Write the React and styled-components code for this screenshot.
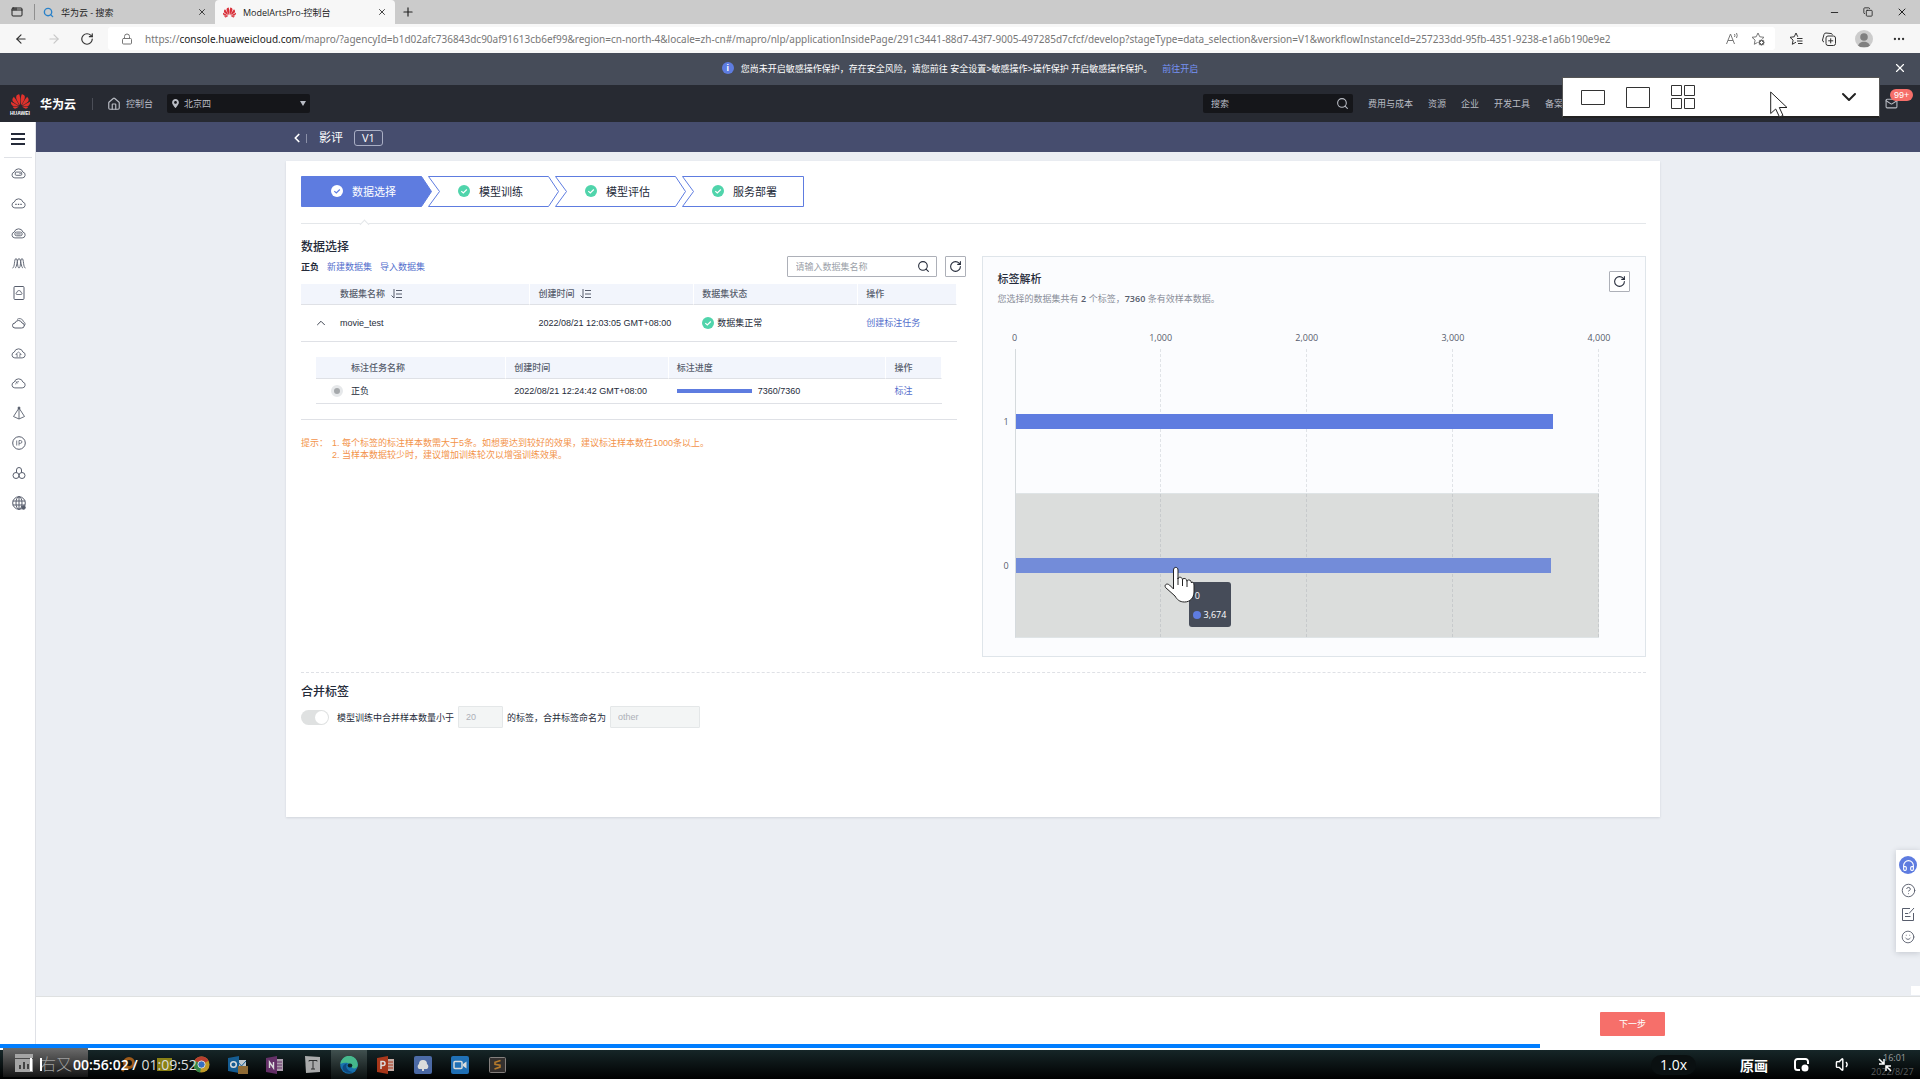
import React, { useState } from "react";
import styled, { createGlobalStyle } from "styled-components";
import {
  AppWindow,
  ArrowLeft,
  ArrowRight,
  ChevronDown,
  ChevronLeft,
  ChevronUp,
  CircleHelp,
  Copy,
  Ellipsis,
  Headphones,
  House,
  Lock,
  Mail,
  Minus,
  Plus,
  RotateCw,
  Search,
  Smile,
  Volume1,
  X
} from "lucide-react";
import { SiHuawei } from "react-icons/si";
import { FaMapMarkerAlt } from "react-icons/fa";

const uiFont = `"Liberation Sans", "Noto Sans CJK SC", sans-serif`;
const chromeFont = `"Open Sans", "Noto Sans CJK SC", sans-serif`;

const GlobalStyle = createGlobalStyle`
  * {
    box-sizing: border-box;
  }

  body {
    margin: 0;
    font-family: ${uiFont};
    font-size: 9px;
    color: #252b3a;
  }

  button, input, select {
    font: inherit;
    color: inherit;
  }

  button {
    padding: 0;
    border: 0;
    background: none;
  }

  svg {
    display: block;
    flex-shrink: 0;
  }
`;

const Window = styled.div`
  display: flex;
  flex-direction: column;
  height: 100vh;
  min-height: 960px;
  position: relative;
  overflow: hidden;
  background: #ebeef3;
`;

/* browser chrome */

const TabStrip = styled.div`
  display: flex;
  align-items: center;
  height: 24px;
  flex-shrink: 0;
  background: #cbcbcb;
  font-family: ${chromeFont};
  color: #222;
`;

const TabMenu = styled.button`
  display: flex;
  justify-content: center;
  width: 35px;
  height: 16px;
  align-items: center;
  border-right: 1px solid #8f8f8f;
`;

const Tab = styled.div`
  display: flex;
  align-items: center;
  gap: 7px;
  width: 180px;
  height: 24px;
  padding: 0 8px;
  border-radius: 4px 4px 0 0;
  background: ${props => (props.$active ? "#f7f7f7" : "transparent")};
`;

const TabTitle = styled.span`
  flex: 1;
  white-space: nowrap;
`;

const NewTab = styled.button`
  margin-left: 6px;
`;

const WindowButtons = styled.div`
  display: flex;
  align-items: center;
  gap: 23px;
  margin-left: auto;
  margin-right: 12px;
`;

const Toolbar = styled.div`
  display: flex;
  align-items: center;
  height: 29px;
  flex-shrink: 0;
  background: #f7f7f7;
  font-family: ${chromeFont};
  color: #333;
`;

const NavButtons = styled.div`
  display: flex;
  gap: 19px;
  width: 108px;
  padding-left: 14px;
`;

const AddressBar = styled.div`
  display: flex;
  align-items: center;
  flex: 1;
  min-width: 0;
  gap: 12px;
  height: 23px;
  padding: 0 10px 0 13px;
  border-radius: 3px;
  background: #fff;
  color: #777;
`;

const Url = styled.div`
  flex: 1;
  overflow: hidden;
  white-space: nowrap;
  font-family: "Noto Sans", sans-serif;
  font-size: 10px;

  b {
    font-weight: 400;
    color: #222;
  }
`;

const ToolbarIcons = styled.div`
  display: flex;
  align-items: center;
  gap: 19px;
  padding: 0 14px;
`;

const Avatar = styled.div`
  display: flex;
  align-items: flex-end;
  justify-content: center;
  width: 18px;
  height: 18px;
  overflow: hidden;
  border-radius: 50%;
  background: #ccc;
`;

/* console header */

const Notice = styled.div`
  display: flex;
  align-items: center;
  justify-content: center;
  position: relative;
  height: 32px;
  flex-shrink: 0;
  padding-bottom: 2px;
  background: #464c59;
  color: #fff;

  a {
    margin-left: 10px;
    color: #7693f5;
    text-decoration: none;
  }
`;

const InfoDot = styled.span`
  width: 12px;
  height: 12px;
  margin-right: 7px;
  border-radius: 50%;
  background: #5e7ce0;
  font-weight: 700;
  line-height: 12px;
  text-align: center;
`;

const NoticeClose = styled.button`
  position: absolute;
  right: 13px;
`;

const Header = styled.header`
  display: flex;
  align-items: center;
  height: 37px;
  flex-shrink: 0;
  background: #272a32;
  color: #b9bcc4;
`;

const Brand = styled.a`
  display: flex;
  align-items: center;
  gap: 10px;
  padding: 0 16px 0 10px;
  font-size: 12px;
  font-weight: 700;
  color: #fff;
  text-decoration: none;
`;

const LogoMark = styled.span`
  display: flex;
  flex-direction: column;
  align-items: center;
  width: 20px;
  font-size: 5px;
  line-height: 5px;
`;

const Home = styled.a`
  display: flex;
  align-items: center;
  gap: 5px;
  height: 12px;
  padding: 0 14px;
  border-left: 1px solid #4b4e57;
  color: inherit;
  text-decoration: none;
`;

const DarkField = styled.label`
  display: flex;
  align-items: center;
  width: ${props => props.$width}px;
  height: 19px;
  padding: 0 4px;
  border-radius: 2px;
  background: #15161a;

  select,
  input {
    flex: 1;
    min-width: 0;
    border: 0;
    outline: 0;
    padding: 0 4px;
    appearance: none;
    background: transparent;
  }

  input::placeholder {
    color: #b9bcc4;
  }
`;

const HeaderSpace = styled.div`
  flex: 1;
`;

const HeaderLinks = styled.nav`
  display: flex;
  align-items: center;
  gap: 15px;
  width: 552px;
  margin-left: 15px;
  padding-right: 22px;

  a {
    color: inherit;
    text-decoration: none;
    white-space: nowrap;
  }
`;

const MailButton = styled.button`
  position: relative;
  margin-left: auto;
`;

const Badge = styled.span`
  position: absolute;
  top: -8px;
  left: 5px;
  padding: 0 4px;
  border-radius: 6px;
  background: #f66f6a;
  line-height: 12px;
  color: #fff;
`;

/* page body */

const Body = styled.div`
  display: flex;
  flex: 1;
  min-height: 0;
`;

const Sidebar = styled.aside`
  display: flex;
  flex-direction: column;
  align-items: center;
  width: 36px;
  border-right: 1px solid #dfe1e6;
  background: #fff;
  color: #575d6c;
`;

const MenuButton = styled.button`
  display: flex;
  justify-content: center;
  align-items: center;
  width: 28px;
  height: 36px;
  padding-bottom: 2px;
  border-bottom: 1px solid #dfe1e6;
`;

const SideLink = styled.a`
  display: flex;
  align-items: center;
  justify-content: center;
  width: 36px;
  height: 30px;
  padding-left: 2px;
  color: inherit;
`;

const Main = styled.main`
  display: flex;
  flex-direction: column;
  flex: 1;
  min-width: 0;
`;

const TitleBar = styled.div`
  display: flex;
  align-items: center;
  height: 30px;
  flex-shrink: 0;
  padding: 2px 0 0 254px;
  background: #464d6e;
  font-size: 12px;
  color: #fff;
`;

const AppName = styled.span`
  margin: 0 11px 0 2px;
  padding-left: 12px;
  border-left: 1px solid #8b90a8;
  line-height: 9px;
`;

const Version = styled.span`
  padding: 0 7px;
  border: 1px solid #a9aec4;
  border-radius: 3px;
  font-family: ${chromeFont};
  font-size: 11px;
  line-height: 14px;
`;

const Scroller = styled.div`
  flex: 1;
  min-height: 0;
  padding: 9px 260px 0 250px;
`;

const Sheet = styled.section`
  padding: 15px 14px 89px 15px;
  background: #fff;
  box-shadow: 0 1px 2px rgba(37, 43, 58, 0.12);
`;

const Steps = styled.div`
  display: flex;
`;

const Step = styled.button`
  display: flex;
  align-items: center;
  gap: 9px;
  position: relative;
  width: 131px;
  height: 31px;
  margin-right: -4px;
  padding: 0 0 2px 30px;
  font-size: 11px;
  color: ${props => (props.$current ? "#fff" : "#252b3a")};
`;

const StepShape = styled.svg`
  position: absolute;
  inset: 0;
`;

const StepMark = styled.span`
  position: relative;
`;

const StepDivider = styled.div`
  position: relative;
  height: 1px;
  margin-top: 16px;
  background: #e4e7ea;

  &::before {
    content: "";
    position: absolute;
    top: -2px;
    left: 60px;
    width: 6px;
    height: 6px;
    border: solid #e4e7ea;
    border-width: 1px 0 0 1px;
    background: #fff;
    transform: rotate(45deg);
  }
`;

const Columns = styled.div`
  display: grid;
  grid-template-columns: 1fr 1fr;
  gap: 16px;
`;

const DataColumn = styled.div`
  padding-top: 15px;
`;

const SectionTitle = styled.h2`
  margin: 0;
  font-size: 12px;
  font-weight: 500;
  line-height: 16px;
`;

const Filters = styled.div`
  display: flex;
  align-items: center;
  gap: 8px;
  height: 21px;
  margin: 1px 0 7px;
`;

const TextLink = styled.a`
  color: #526ecc;
  text-decoration: none;
`;

const SearchBox = styled.label`
  display: flex;
  align-items: center;
  width: 150px;
  height: 21px;
  margin-left: auto;
  padding: 0 6px 0 8px;
  border: 1px solid #adb0b8;
  border-radius: 1px;

  input {
    flex: 1;
    min-width: 0;
    padding: 0;
    border: 0;
    outline: 0;
  }

  input::placeholder {
    color: #9b9fa8;
  }
`;

const SquareButton = styled.button`
  display: flex;
  align-items: center;
  justify-content: center;
  width: 21px;
  height: 21px;
  border: 1px solid #adb0b8;
  border-radius: 1px;
  background: #fff;
`;

const DataTable = styled.table`
  width: ${props => (props.$inner ? "100%" : "calc(100% - 9px)")};
  table-layout: fixed;
  border-collapse: separate;
  border-spacing: 0;
  text-align: left;
  line-height: 12px;
`;

const Col = styled.col`
  width: ${props => props.$share}%;
`;

const Th = styled.th`
  height: ${props => (props.$tall ? 22 : 21)}px;
  padding: 0 8px 0 ${props => props.$indent || 8}px;
  border-bottom: 1px solid #dfe1e6;
  border-right: 1px solid #fff;
  background: #f2f5fc;
  font-weight: 500;
  color: #575d6c;
`;

const Td = styled.td`
  height: ${props => (props.$tight ? 25 : 37)}px;
  padding: 0 8px 0 ${props => props.$indent || 8}px;
  border-bottom: 1px solid #dfe1e6;
`;

const NestedCell = styled.td`
  padding: 15px;
  border-bottom: 1px solid #dfe1e6;
`;

const CellFlow = styled.div`
  display: flex;
  align-items: center;
  gap: ${props => props.$gap}px;
`;

const Radio = styled.input`
  width: 12px;
  height: 12px;
  margin: 0;
  appearance: none;
  border: 3px solid #e6e8ea;
  border-radius: 50%;
  background: #a5a8ab;
`;

const Progress = styled.div`
  width: 75px;
  height: 4px;
  background: #e4e7ea;
`;

const ProgressFill = styled.div`
  height: 100%;
  background: #5e7ce0;
`;

const Hints = styled.div`
  display: flex;
  margin-top: 17px;
  line-height: 12px;
  color: #f3934b;
`;

const HintList = styled.div`
  margin-left: 4px;
`;

const ChartPanel = styled.section`
  height: 401px;
  margin-top: 32px;
  padding: 14px 15px;
  border: 1px solid #dfe5ea;
  background: #fbfcfe;
`;

const ChartHead = styled.div`
  display: flex;
  justify-content: space-between;
`;

const ChartTitle = styled.h3`
  margin: 0 0 6px;
  font-size: 11px;
  font-weight: 500;
  line-height: 16px;
`;

const ChartNote = styled.p`
  margin: 0;
  line-height: 12px;
  color: #8a8e99;

  b {
    font-family: ${chromeFont};
    font-weight: 600;
    color: #575d6c;
  }
`;

const Ticks = styled.div`
  display: flex;
  justify-content: space-between;
  margin: 27px 31px 5px 17px;
  font-family: ${chromeFont};
  line-height: 12px;
  color: #575d6c;
`;

const Tick = styled.span`
  display: flex;
  justify-content: center;
  width: 0;
`;

const Plot = styled.div`
  position: relative;
  margin: 0 31px 0 17px;
  border-left: 1px solid #d5dadd;
  border-bottom: 1px solid #dfe4e6;
`;

const GridLines = styled.div`
  display: grid;
  grid-template-columns: repeat(4, 1fr);
  position: absolute;
  inset: 0;

  span {
    border-right: 1px dashed rgba(120, 130, 140, 0.2);
  }
`;

const Band = styled.div`
  display: flex;
  align-items: center;
  height: 144px;
  border-top: 1px solid ${props => (props.$hovered ? "#dfe4e6" : "transparent")};
  background: ${props => (props.$hovered ? "#dbdddc" : "none")};
`;

const BandName = styled.span`
  position: absolute;
  left: -12px;
  font-family: ${chromeFont};
  color: #575d6c;
`;

const Bar = styled.div`
  position: relative;
  z-index: 1;
  height: 15px;
  background: ${props => (props.$hovered ? "#738cd9" : "#5e7ce0")};
`;

const Tooltip = styled.div`
  position: absolute;
  z-index: 1;
  top: 233px;
  left: 173px;
  width: 42px;
  height: 45px;
  padding: 4px;
  border-radius: 3px;
  background: #464c59;
  font-family: ${chromeFont};
  line-height: 19px;
  color: #fff;
`;

const Dot = styled.span`
  width: 8px;
  height: 8px;
  border-radius: 50%;
  background: #5e7ce0;
`;

const HandCursor = styled.svg`
  position: absolute;
  z-index: 2;
  top: 217px;
  left: 148px;
`;

const MergeSection = styled.section`
  margin-top: 15px;
  padding-top: 11px;
  border-top: 1px dashed #dfe1e6;
`;

const MergeRow = styled.div`
  display: flex;
  align-items: center;
  height: 22px;
  margin-top: 6px;
`;

const Toggle = styled.input`
  display: flex;
  align-items: center;
  justify-content: flex-end;
  width: 28px;
  height: 15px;
  margin: 0 8px 0 0;
  padding: 1px;
  appearance: none;
  border-radius: 8px;
  background: #dfe1e1;

  &::before {
    content: "";
    width: 13px;
    height: 13px;
    border-radius: 50%;
    background: #fff;
  }
`;

const DisabledInput = styled.input`
  width: ${props => props.$width}px;
  height: 22px;
  margin: 0 4px;
  padding: 0 7px;
  border: 1px solid #e4e7e8;
  border-radius: 1px;
  background: #f3f5f5;
  color: #adb0b8;
`;

const Footer = styled.footer`
  display: flex;
  align-items: center;
  justify-content: flex-end;
  height: 48px;
  flex-shrink: 0;
  padding: 6px 255px 0 0;
  border-top: 1px solid #dfe1e1;
  background: #fff;
`;

const NextButton = styled.button`
  width: 65px;
  height: 24px;
  border-radius: 1px;
  background: #f66f6a;
  color: #fff;
`;

/* things floating over the page */

const HelpDock = styled.div`
  display: flex;
  flex-direction: column;
  align-items: center;
  gap: 9px;
  position: absolute;
  right: 0;
  bottom: 127px;
  width: 24px;
  height: 102px;
  padding-top: 6px;
  background: #fff;
  box-shadow: 0 1px 6px rgba(37, 43, 58, 0.2);
  color: #575d6c;
`;

const Headset = styled.button`
  display: flex;
  align-items: center;
  justify-content: center;
  width: 18px;
  height: 18px;
  border-radius: 50%;
  background: #5e7ce0;
  color: #fff;
`;

const ScrollCorner = styled.div`
  position: absolute;
  right: 0;
  bottom: 84px;
  width: 9px;
  height: 9px;
  background: #fff;
`;

const ViewPanel = styled.div`
  display: flex;
  align-items: center;
  gap: 21px;
  position: absolute;
  top: 77px;
  right: 40px;
  width: 318px;
  height: 41px;
  padding: 0 18px;
  border: 1px solid #555;
  border-bottom: 2px solid #222;
  background: #fff;
`;

const ViewToggle = styled.button`
  margin-left: auto;
`;

const ArrowCursor = styled.svg`
  position: absolute;
  top: 13px;
  left: 207px;
`;

/* video player strip */

const Timeline = styled.div`
  height: 6px;
  flex-shrink: 0;
  background: #fff;
`;

const Played = styled.div`
  height: 4px;
  background: #007eff;
`;

const Taskbar = styled.div`
  display: flex;
  align-items: center;
  position: relative;
  height: 29px;
  flex-shrink: 0;
  background: linear-gradient(#162628, #000);
`;

const Apps = styled.div`
  display: flex;
  flex: 1;
  padding-left: 109px;
`;

const AppSlot = styled.span`
  display: flex;
  align-items: center;
  justify-content: center;
  width: 36px;
  height: 29px;
  margin-right: 1px;
  background: ${props => (props.$open ? "linear-gradient(#40504f, #0b1010)" : "none")};

  svg {
    opacity: 0.85;
  }
`;

const Clock = styled.div`
  width: 54px;
  padding-left: 17px;
  font-family: ${chromeFont};
  line-height: 14px;
  color: #9b9f9f;

  small {
    display: block;
    margin-left: -12px;
    font-size: 9px;
    color: #5a5d5e;
  }
`;

const InputHint = styled.div`
  display: flex;
  align-items: center;
  gap: 7px;
  position: absolute;
  left: 3px;
  bottom: 2px;
  width: 85px;
  height: 29px;
  padding-left: 12px;
  background: linear-gradient(#6b6b6b, #151515);
  font-size: 16px;
  font-weight: 300;
  color: #a0a0a0;
`;

const PlayerLeft = styled.div`
  display: flex;
  align-items: center;
  gap: 31px;
  position: absolute;
  left: 30px;
  top: 0;
  height: 29px;
`;

const PauseButton = styled.button`
  width: 12px;
  height: 13px;
  border: solid #fff;
  border-width: 0 2px;
`;

const Time = styled.span`
  font-family: ${chromeFont};
  font-size: 14px;
  color: #dcdcdc;
  white-space: nowrap;

  b {
    font-weight: 600;
    color: #fff;
  }
`;

const PlayerRight = styled.div`
  display: flex;
  align-items: center;
  position: absolute;
  right: 28px;
  top: 0;
  height: 29px;
  gap: 26px;
  color: #fff;
`;

const Speed = styled.button`
  width: 45px;
  height: 20px;
  margin-right: 18px;
  border-radius: 10px;
  background: #0a1011;
  font-family: ${chromeFont};
  font-size: 14px;
  line-height: 20px;
`;

const Quality = styled.button`
  font-size: 14px;
  font-weight: 700;
`;

const CheckDot = ({ light }) => (
  <svg width="12" height="12" viewBox="0 0 12 12">
    <circle cx="6" cy="6" r="6" fill={light ? "#fff" : "#50d4ab"} />
    <path d="M3.3 6.1l2 1.9 3.5-3.5" fill="none" stroke={light ? "#5e7ce0" : "#fff"} strokeWidth="1.2" />
  </svg>
);

const SortIcon = () => (
  <svg width="12" height="10" viewBox="0 0 12 10" fill="none" stroke="#575d6c">
    <path d="M3 0v9L.5 6.5M5 1.5h6M5 5h6M5 8.5h6" />
  </svg>
);

const Cloud = ({ children }) => (
  <svg width="15" height="12" viewBox="0 0 16 13" fill="none" stroke="currentColor">
    <path d="M4 11.8h8a3.2 3.2 0 0 0 .8-6.3 4.9 4.9 0 0 0-9.4 0A3.2 3.2 0 0 0 4 11.8z" />
    {children}
  </svg>
);

const Glyph = ({ children }) => (
  <svg width="14" height="14" viewBox="0 0 14 14" fill="none" stroke="currentColor">
    {children}
  </svg>
);

const sideIcons = [
  <Cloud><rect x="4.5" y="5.5" width="7" height="3.5" rx="1" /><path d="M9 7.2h1.5" /></Cloud>,
  <Cloud><path d="M4.5 8h1.5M7.3 8h1.5M10 8h1.5" strokeWidth="1.5" /></Cloud>,
  <Cloud><rect x="4" y="5.5" width="8" height="4" rx="2" /><path d="M5.5 7.5h5" /></Cloud>,
  <Glyph><path d="M.5 12C3 12 2 2.5 4 2.5S5 12 7 12s1-9.5 3-9.5S11 12 13.5 12M3 12C5 12 5 2.5 7 2.5S9 12 11 12" strokeWidth=".9" /></Glyph>,
  <Glyph><rect x="2" y=".5" width="10" height="13" rx="1" /><path d="M5 8.5h4a1 1 0 0 0 0-2 2 2 0 0 0-4 0 1 1 0 0 0 0 2z" strokeWidth=".8" /></Glyph>,
  <Glyph><path d="M3 12h6.5a2.5 2.5 0 0 0 .5-5 3.7 3.7 0 0 0-7 0A2.5 2.5 0 0 0 3 12z" /><path d="M5 3.5a4 4 0 0 1 6.5 2.2 2.4 2.4 0 0 1 .5 4.3" strokeWidth=".8" /></Glyph>,
  <Cloud><path d="M6.5 11V8H5l3-2.5L11 8H9.5v3" strokeWidth=".8" /></Cloud>,
  <Cloud><path d="M5 8c0-2 1.5-3 3.5-3M5 4.5L7 7" strokeWidth=".8" /></Cloud>,
  <Glyph><path d="M7 2L1.5 10.5 7 13l5.5-2.5zM7 2v11" strokeWidth=".9" /><circle cx="7" cy="2" r="1" fill="currentColor" /></Glyph>,
  <Glyph><circle cx="7" cy="7" r="6.3" /><path d="M4.7 4.5v5M7 9.5v-5h1.5a1.4 1.4 0 0 1 0 2.8H7" strokeWidth=".8" /></Glyph>,
  <Glyph><path d="M4.5 6.5V4a2.5 2.5 0 0 1 5 0v2.5" /><circle cx="4" cy="9.5" r="3" /><circle cx="10" cy="9.5" r="3" /></Glyph>,
  <Glyph><circle cx="7" cy="7" r="6.3" /><ellipse cx="7" cy="7" rx="3" ry="6.3" /><path d="M.7 5h12.6M.7 9h12.6M7 .7v12.6" /><circle cx="11.5" cy="11.5" r="1.8" fill="currentColor" /></Glyph>
];

const star = "M7 1l1.8 3.8 4.2.5-3.1 2.8.8 4.2L7 10.2l-3.7 2.1.8-4.2L1 5.3l4.2-.5z";

const taskIcons = [
  <svg width="18" height="18" viewBox="0 0 18 18"><circle cx="11" cy="7" r="4.5" fill="none" stroke="#b8671a" strokeWidth="3" /><path d="M7 11l-3 4" stroke="#b8671a" strokeWidth="3" /></svg>,
  <svg width="15" height="15" viewBox="0 0 15 15"><path d="M0 1h15v13H0z" fill="#a09414" /></svg>,
  <svg width="17" height="17" viewBox="0 0 18 18"><circle cx="9" cy="9" r="8.5" fill="#e2b32c" /><path d="M9 9L1.6 4.8A8.5 8.5 0 0 1 16.4 5z" fill="#d64533" /><path d="M9 9L1.6 4.8a8.5 8.5 0 0 0 6 12.6z" fill="#3c9d52" /><circle cx="9" cy="9" r="3.8" fill="#3e7fe0" stroke="#fff" /></svg>,
  <svg width="20" height="18" viewBox="0 0 20 18"><path d="M9 4h9v9H9z" fill="#dfe8ef" /><path d="M9 5l4.5 5L18 5" fill="none" stroke="#1769a8" /><path d="M0 2l11-2v17L0 15z" fill="#1769a8" /><circle cx="5.5" cy="8.5" r="2.8" fill="none" stroke="#fff" strokeWidth="1.5" /><path d="M10 10h10v8H10z" fill="#a87c3c" /></svg>,
  <svg width="18" height="18" viewBox="0 0 18 18"><path d="M9 3h8v12H9z" fill="#c9b6c8" /><path d="M11 6h5M11 9h5M11 12h5" stroke="#743576" /><path d="M0 2l11-2v18L0 16z" fill="#743576" /><path d="M3.5 12V6l4 6V6" fill="none" stroke="#fff" strokeWidth="1.4" /></svg>,
  <svg width="17" height="17" viewBox="0 0 17 17"><path d="M1 0l15 1v15L2 17z" fill="#c5c5c5" /><path d="M5 5.5v-1h8v1M9 4.5V13M7 13h4" fill="none" stroke="#333" /></svg>,
  <svg width="18" height="18" viewBox="0 0 18 18"><circle cx="9" cy="9" r="8.8" fill="#177ec4" /><path d="M.4 8A8.7 8.7 0 0 1 17.8 9c0 3-3 4-5.8 3 1-4-6-7-11.6-4z" fill="#4bcf9b" /><path d="M7 7.5c-2 3 0 8 6 8.5a9 9 0 0 1-9-1c-3-3-1-7 3-7.5z" fill="#0c4f92" /><ellipse cx="10" cy="9.5" rx="2.3" ry="2" fill="#0b2226" /></svg>,
  <svg width="18" height="18" viewBox="0 0 18 18"><path d="M9 3h8v12H9z" fill="#e6c7bf" /><path d="M11 6h5M11 9h5M11 12h5" stroke="#c43e1c" /><path d="M0 2l11-2v18L0 16z" fill="#c43e1c" /><path d="M4 13V5.5h2a2 2 0 0 1 0 4H4" fill="none" stroke="#fff" strokeWidth="1.5" /></svg>,
  <svg width="18" height="18" viewBox="0 0 18 18"><rect width="18" height="18" rx="2" fill="#5779bf" /><path d="M5 13a3 3 0 0 1 0-5 4 4 0 0 1 8 0 3 3 0 0 1 0 5z" fill="#fff" /><path d="M9 11v4" stroke="#fff" strokeWidth="2" /></svg>,
  <svg width="18" height="18" viewBox="0 0 18 18"><rect width="18" height="18" rx="2" fill="#2380d2" /><rect x="3" y="5.5" width="8" height="7" rx="1" fill="none" stroke="#fff" strokeWidth="1.5" /><path d="M12 8l3.5-2.5v7L12 10z" fill="#fff" /></svg>,
  <svg width="17" height="16" viewBox="0 0 17 16"><rect x=".5" y=".5" width="16" height="15" rx="1" fill="#3b3634" stroke="#9a9390" /><path d="M11.5 3.5L6 5.3v2l5 .8v2L5.5 12" fill="none" stroke="#d48d30" strokeWidth="1.6" /></svg>
];

const steps = ["数据选择", "模型训练", "模型评估", "服务部署"];
const labels = [
  { name: "1", count: 3686 },
  { name: "0", count: 3674 }
];
const axisMax = 4000;
const played = 56 * 60 + 2;
const duration = 69 * 60 + 52;

function StepOutline({ index, current }) {
  const last = index === steps.length - 1;
  const left = index === 0 ? "M.5 .5" : "M11.5 15.5L.5 .5";
  const right = last ? "H121.5V30.5" : "H120.5L130.5 15.5L120.5 30.5";
  return (
    <StepShape width="131" height="31" viewBox="0 0 131 31">
      <path
        d={`${left}${right}H.5Z`}
        fill={current ? "#5e7ce0" : "#fff"}
        stroke="#5e7ce0"
      />
    </StepShape>
  );
}

function BrowserChrome() {
  return (
    <>
      <TabStrip>
        <TabMenu aria-label="标签页菜单"><AppWindow size={12} /></TabMenu>
        <Tab>
          <Search size={11} color="#2b82c9" strokeWidth={3} />
          <TabTitle>华为云 - 搜索</TabTitle>
          <button aria-label="关闭标签页"><X size={10} /></button>
        </Tab>
        <Tab $active>
          <SiHuawei size={13} color="#d9303a" />
          <TabTitle>ModelArtsPro-控制台</TabTitle>
          <button aria-label="关闭标签页"><X size={10} /></button>
        </Tab>
        <NewTab aria-label="新标签页"><Plus size={14} /></NewTab>
        <WindowButtons>
          <button aria-label="最小化"><Minus size={11} /></button>
          <button aria-label="还原"><Copy size={10} /></button>
          <button aria-label="关闭"><X size={12} /></button>
        </WindowButtons>
      </TabStrip>
      <Toolbar>
        <NavButtons>
          <button aria-label="后退"><ArrowLeft size={14} /></button>
          <button aria-label="前进"><ArrowRight size={14} color="#c8c8c8" /></button>
          <button aria-label="刷新"><RotateCw size={14} /></button>
        </NavButtons>
        <AddressBar>
          <Lock size={12} />
          <Url>
            https://<b>console.huaweicloud.com</b>
            /mapro/?agencyId=b1d02afc736843dc90af91613cb6ef99&amp;region=cn-north-4&amp;locale=zh-cn#/mapro/nlp/applicationInsidePage/291c3441-88d7-43f7-9005-497285d7cfcf/develop?stageType=data_selection&amp;version=V1&amp;workflowInstanceId=257233dd-95fb-4351-9238-e1a6b190e9e2
          </Url>
          <Glyph><path d="M1.5 12L5.5 2l4 10M3 8.5h5M9.5 2a3 3 0 0 1 0 3M11.5 1a5 5 0 0 1 0 5" /></Glyph>
          <Glyph><path d={star} /><circle cx="10.5" cy="10.5" r="3.5" fill="#666" stroke="#fff" /><path d="M9 10.5h3M10.5 9v3" stroke="#fff" /></Glyph>
        </AddressBar>
        <ToolbarIcons>
          <Glyph><path d="M7 10.2l-3.7 2.1.8-4.2L1 5.3l4.2-.5L7 1l1.8 3.8M8 6.5h5.5M8 9h5.5M9 11.5h4.5" /></Glyph>
          <Glyph><rect x="4" y="4" width="9.5" height="9.5" rx="2" /><path d="M8.7 6.3v5M6.2 8.8h5M2 10a2 2 0 0 1-1.5-2L2 2.5A2 2 0 0 1 4 1l5 .5a2 2 0 0 1 1.5 1.2" /></Glyph>
          <Avatar>
            <svg width="14" height="16" viewBox="0 0 14 16" fill="#808080"><circle cx="7" cy="5" r="3.8" /><path d="M1 15c0-7 12-7 12 0z" /></svg>
          </Avatar>
          <Ellipsis size={14} />
        </ToolbarIcons>
      </Toolbar>
    </>
  );
}

function ConsoleHeader() {
  return (
    <>
      <Notice>
        <InfoDot>i</InfoDot>
        您尚未开启敏感操作保护，存在安全风险，请您前往 安全设置&gt;敏感操作&gt;操作保护 开启敏感操作保护。
        <a href="#security">前往开启</a>
        <NoticeClose aria-label="关闭提示"><X size={14} /></NoticeClose>
      </Notice>
      <Header>
        <Brand href="#home">
          <LogoMark>
            <SiHuawei size={19} color="#e0322c" />
            HUAWEI
          </LogoMark>
          华为云
        </Brand>
        <Home href="#console"><House size={14} />控制台</Home>
        <DarkField $width={143}>
          <FaMapMarkerAlt size={9} />
          <select aria-label="区域"><option>北京四</option></select>
          <svg width="6" height="5" viewBox="0 0 6 5" fill="currentColor"><path d="M0 0h6L3 5z" /></svg>
        </DarkField>
        <HeaderSpace />
        <DarkField $width={150}>
          <input aria-label="搜索" placeholder="搜索" />
          <Search size={13} />
        </DarkField>
        <HeaderLinks>
          <a href="#cost">费用与成本</a>
          <a href="#resource">资源</a>
          <a href="#company">企业</a>
          <a href="#tools">开发工具</a>
          <a href="#icp">备案</a>
          <MailButton aria-label="消息"><Mail size={13} /><Badge>99+</Badge></MailButton>
        </HeaderLinks>
      </Header>
    </>
  );
}

function DatasetTable() {
  return (
    <DataTable>
      <colgroup>
        <Col $share={35} /><Col $share={25} /><Col $share={25} /><Col $share={15} />
      </colgroup>
      <thead>
        <tr>
          <Th $indent={39}><CellFlow $gap={6}>数据集名称 <SortIcon /></CellFlow></Th>
          <Th><CellFlow $gap={6}>创建时间 <SortIcon /></CellFlow></Th>
          <Th>数据集状态</Th>
          <Th>操作</Th>
        </tr>
      </thead>
      <tbody>
        <tr>
          <Td $indent={13}>
            <CellFlow $gap={12}>
              <button aria-label="收起"><ChevronUp size={14} strokeWidth={1.5} /></button>
              movie_test
            </CellFlow>
          </Td>
          <Td>2022/08/21 12:03:05 GMT+08:00</Td>
          <Td><CellFlow $gap={3}><CheckDot />数据集正常</CellFlow></Td>
          <Td><TextLink href="#create">创建标注任务</TextLink></Td>
        </tr>
        <tr>
          <NestedCell colSpan={4}>
            <DataTable $inner>
              <colgroup>
                <Col $share={30.4} /><Col $share={26} /><Col $share={34.8} /><Col $share={8.8} />
              </colgroup>
              <thead>
                <tr>
                  <Th $tall $indent={35}>标注任务名称</Th>
                  <Th $tall>创建时间</Th>
                  <Th $tall>标注进度</Th>
                  <Th $tall>操作</Th>
                </tr>
              </thead>
              <tbody>
                <tr>
                  <Td $tight $indent={15}>
                    <CellFlow as="label" $gap={8}>
                      <Radio type="radio" name="task" defaultChecked />
                      正负
                    </CellFlow>
                  </Td>
                  <Td $tight>2022/08/21 12:24:42 GMT+08:00</Td>
                  <Td $tight>
                    <CellFlow $gap={6}>
                      <Progress><ProgressFill style={{ width: `${(7360 / 7360) * 100}%` }} /></Progress>
                      7360/7360
                    </CellFlow>
                  </Td>
                  <Td $tight><TextLink href="#label">标注</TextLink></Td>
                </tr>
              </tbody>
            </DataTable>
          </NestedCell>
        </tr>
      </tbody>
    </DataTable>
  );
}

function LabelChart() {
  const [hovered] = useState("0");

  return (
    <ChartPanel>
      <ChartHead>
        <div>
          <ChartTitle>标签解析</ChartTitle>
          <ChartNote>您选择的数据集共有 <b>2</b> 个标签，<b>7360</b> 条有效样本数据。</ChartNote>
        </div>
        <SquareButton aria-label="刷新图表"><RotateCw size={13} /></SquareButton>
      </ChartHead>
      <Ticks>
        {[0, 1000, 2000, 3000, 4000].map(value => (
          <Tick key={value}>{value.toLocaleString("en-US")}</Tick>
        ))}
      </Ticks>
      <Plot>
        {labels.map(label => (
          <Band key={label.name} $hovered={label.name === hovered}>
            <BandName>{label.name}</BandName>
            <Bar
              $hovered={label.name === hovered}
              style={{ width: `${(label.count / axisMax) * 100}%` }}
            />
          </Band>
        ))}
        <GridLines><span /><span /><span /><span /></GridLines>
        <Tooltip>
          <div>&nbsp;0</div>
          <CellFlow $gap={3}><Dot />3,674</CellFlow>
        </Tooltip>
        <HandCursor width="31" height="37" viewBox="0 0 31 37">
          <path
            d="M9.5 23V4c0-3.5 4.5-3.5 4.5 0v9c0-2.5 4.5-2.5 4.5 1 0-2.5 4.5-2 4.5 1.5 0-2.5 4.5-2 4.5 1.5 0-1.5 2.5-1 2.5 2v7c0 6-4 10-9.5 10-5 0-7.5-2.5-9.5-6L1.5 21.5c-1.5-3 1.5-4.5 4-2.5z"
            fill="#fff"
            stroke="#222"
          />
          <path d="M14 12v7M18.5 14v6M23 15.5V21" stroke="#222" />
        </HandCursor>
      </Plot>
    </ChartPanel>
  );
}

function VideoPlayer() {
  return (
    <>
      <Timeline><Played style={{ width: `${(played / duration) * 100}%` }} /></Timeline>
      <Taskbar>
        <Apps>
          {taskIcons.map((icon, index) => (
            <AppSlot key={index} $open={index === 6}>{icon}</AppSlot>
          ))}
        </Apps>
        <Clock>16:01<small>2022/8/27</small></Clock>
        <InputHint>
          <svg width="18" height="18" viewBox="0 0 18 18" fill="#a5a5a5"><path d="M0 0h18v4H0zM0 5h18v13H0z" /><path d="M5 15v-4M9 15V8M13 15v-5" stroke="#444" strokeWidth="2" /></svg>
          右又
        </InputHint>
        <PlayerLeft>
          <PauseButton aria-label="暂停" />
          <Time><b>00:56:02 /</b> 01:09:52</Time>
        </PlayerLeft>
        <PlayerRight>
          <Speed>1.0x</Speed>
          <Quality>原画</Quality>
          <button aria-label="画中画">
            <svg width="15" height="14" viewBox="0 0 15 14" fill="none" stroke="#fff" strokeWidth="2"><path d="M6 12H3.5A2.5 2.5 0 0 1 1 9.5v-6A2.5 2.5 0 0 1 3.5 1h8A2.5 2.5 0 0 1 14 3.5V6" /><circle cx="11" cy="10" r="2.5" fill="#fff" /></svg>
          </button>
          <button aria-label="音量"><Volume1 size={17} /></button>
          <button aria-label="退出全屏">
            <svg width="14" height="16" viewBox="0 0 14 16" fill="none" stroke="#fff" strokeWidth="1.5"><path d="M1 2l4.5 4.5M6 2v5H1M13 14L8.5 9.5M8 14V9h5" /></svg>
          </button>
        </PlayerRight>
      </Taskbar>
    </>
  );
}

function App() {
  return (
    <Window>
      <GlobalStyle />
      <BrowserChrome />
      <ConsoleHeader />
      <Body>
        <Sidebar>
          <MenuButton aria-label="菜单">
            <svg width="14" height="12" viewBox="0 0 14 12" stroke="#252b3a" strokeWidth="2"><path d="M0 1h14M0 6h14M0 11h14" /></svg>
          </MenuButton>
          {sideIcons.map((icon, index) => (
            <SideLink key={index} href="#service" aria-label="服务">{icon}</SideLink>
          ))}
        </Sidebar>
        <Main>
          <TitleBar>
            <button aria-label="返回"><ChevronLeft size={14} strokeWidth={3} /></button>
            <AppName>影评</AppName>
            <Version>V1</Version>
          </TitleBar>
          <Scroller>
            <Sheet>
              <Steps>
                {steps.map((step, index) => (
                  <Step key={step} $current={index === 0}>
                    <StepOutline index={index} current={index === 0} />
                    <StepMark><CheckDot light={index === 0} /></StepMark>
                    <StepMark>{step}</StepMark>
                  </Step>
                ))}
              </Steps>
              <StepDivider />
              <Columns>
                <DataColumn>
                  <SectionTitle>数据选择</SectionTitle>
                  <Filters>
                    <strong>正负</strong>
                    <TextLink href="#new">新建数据集</TextLink>
                    <TextLink href="#import">导入数据集</TextLink>
                    <SearchBox>
                      <input aria-label="数据集名称" placeholder="请输入数据集名称" />
                      <Search size={13} />
                    </SearchBox>
                    <SquareButton aria-label="刷新"><RotateCw size={13} /></SquareButton>
                  </Filters>
                  <DatasetTable />
                  <Hints>
                    提示：
                    <HintList>
                      <div>1. 每个标签的标注样本数需大于5条。如想要达到较好的效果，建议标注样本数在1000条以上。</div>
                      <div>2. 当样本数据较少时，建议增加训练轮次以增强训练效果。</div>
                    </HintList>
                  </Hints>
                </DataColumn>
                <LabelChart />
              </Columns>
              <MergeSection>
                <SectionTitle>合并标签</SectionTitle>
                <MergeRow>
                  <Toggle type="checkbox" id="merge" defaultChecked disabled />
                  <label htmlFor="merge">模型训练中合并样本数量小于</label>
                  <DisabledInput $width={45} aria-label="样本数量" defaultValue="20" disabled />
                  的标签，合并标签命名为
                  <DisabledInput $width={90} aria-label="合并标签名" defaultValue="other" disabled />
                </MergeRow>
              </MergeSection>
            </Sheet>
          </Scroller>
          <Footer>
            <NextButton>下一步</NextButton>
          </Footer>
        </Main>
      </Body>
      <VideoPlayer />
      <ScrollCorner />
      <HelpDock>
        <Headset aria-label="客服"><Headphones size={13} /></Headset>
        <CircleHelp size={15} strokeWidth={1.5} />
        <Glyph><path d="M9 1.5H1.5v12h11V6M4 6.5h3M4 9.5h5.5M13 1L8 6.5" /></Glyph>
        <Smile size={14} strokeWidth={1.5} />
      </HelpDock>
      <ViewPanel>
        <svg width="24" height="15" viewBox="0 0 24 15" fill="none" stroke="#333"><path d="M.5 .5h23v14H.5z" /></svg>
        <svg width="24" height="21" viewBox="0 0 24 21" fill="none" stroke="#333"><path d="M.5 .5h23v20H.5z" /></svg>
        <svg width="24" height="24" viewBox="0 0 24 24" fill="none" stroke="#333"><path d="M.5 .5h10v10H.5zM13.5 .5h10v10h-10zM.5 13.5h10v10H.5zM13.5 13.5h10v10h-10z" /></svg>
        <ViewToggle aria-label="展开"><ChevronDown size={24} color="#222" /></ViewToggle>
        <ArrowCursor width="19" height="27" viewBox="0 0 19 27">
          <path d="M.7 1v21.5l5-4.5 3.8 8 3.5-1.5-3.7-8H17z" fill="#fff" stroke="#222" />
        </ArrowCursor>
      </ViewPanel>
    </Window>
  );
}

export default App;
